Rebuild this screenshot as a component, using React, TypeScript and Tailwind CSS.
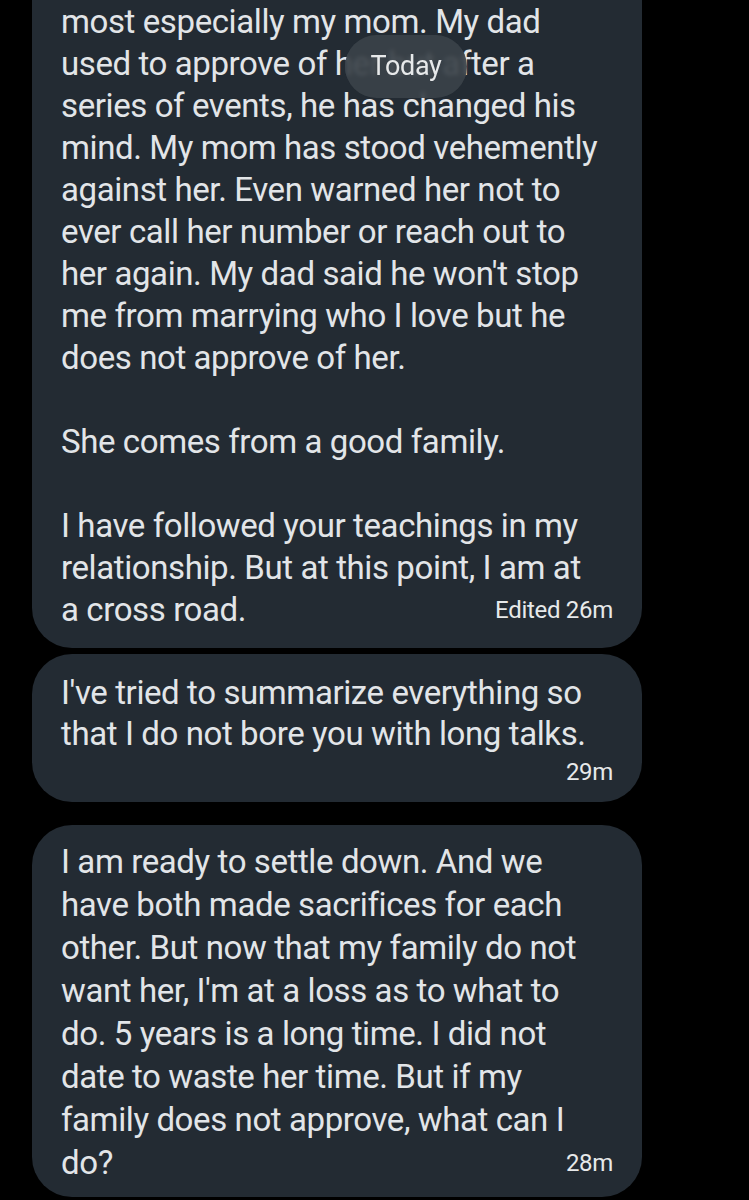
import React from 'react'

const firstLines = [
    'most especially my mom. My dad',
    'used to approve of her but after a',
    'series of events, he has changed his',
    'mind. My mom has stood vehemently',
    'against her. Even warned her not to',
    'ever call her number or reach out to',
    "her again. My dad said he won't stop",
    'me from marrying who I love but he',
    'does not approve of her.',
    '',
    'She comes from a good family.',
    '',
    'I have followed your teachings in my',
    'relationship. But at this point, I am at',
]

const lastLines = [
    'I am ready to settle down. And we',
    'have both made sacrifices for each',
    'other. But now that my family do not',
    "want her, I'm at a loss as to what to",
    'do. 5 years is a long time. I did not',
    'date to waste her time. But if my',
    'family does not approve, what can I',
]

function Line({ text, h = 42 }: { text: string; h?: number }) {
    return (
        <div className={h === 43 ? 'h-[43px] leading-[43px] whitespace-pre' : 'h-[42px] leading-[42px] whitespace-pre'}>
            {text || ' '}
        </div>
    )
}

function Stamp({ children }: { children: React.ReactNode }) {
    return <span className="text-[24px] leading-[42px] text-[#e7e9ea] tracking-[-0.3px]">{children}</span>
}

export default function App() {
    return (
        <div
            className="w-[749px] h-[1200px] overflow-hidden bg-black text-[#e2e5e8] text-[33px] tracking-[-0.4px]"
            style={{ fontFamily: 'Roboto, "Noto Sans", sans-serif' }}
        >
            <div className="flex flex-col pl-[32px] w-[642px]">
                {/* first message, top is cut off */}
                <div className="relative bg-[#232b33] rounded-b-[40px] px-[29px] pt-[1px] pb-[17px]">
                    {firstLines.map((l, i) => <Line key={i} text={l} />)}
                    <div className="flex justify-between items-center h-[42px]">
                        <span className="leading-[42px]">a cross road.</span>
                        <Stamp>Edited 26m</Stamp>
                    </div>

                    <div className="absolute left-[313px] top-[35px] w-[122px] h-[63px] rounded-full bg-[#3b4249]/90 backdrop-blur-[2px] flex items-center justify-center">
                        <span className="text-[27px] text-[#e7e9ea] tracking-[-0.3px]">Today</span>
                    </div>
                </div>

                <div className="mt-[6px] bg-[#232b33] rounded-[40px] px-[29px] pt-[18px] pb-[12px]">
                    <div className="h-[41px] leading-[41px]">I've tried to summarize everything so</div>
                    <div className="h-[41px] leading-[41px]">that I do not bore you with long talks.</div>
                    <div className="flex justify-end h-[36px] items-center">
                        <Stamp>29m</Stamp>
                    </div>
                </div>

                <div className="mt-[23px] bg-[#232b33] rounded-[40px] px-[29px] pt-[15px] pb-[13px]">
                    {lastLines.map((l, i) => <Line key={i} text={l} h={43} />)}
                    <div className="flex justify-between items-center h-[43px]">
                        <span className="leading-[43px]">do?</span>
                        <Stamp>28m</Stamp>
                    </div>
                </div>
            </div>
        </div>
    )
}
